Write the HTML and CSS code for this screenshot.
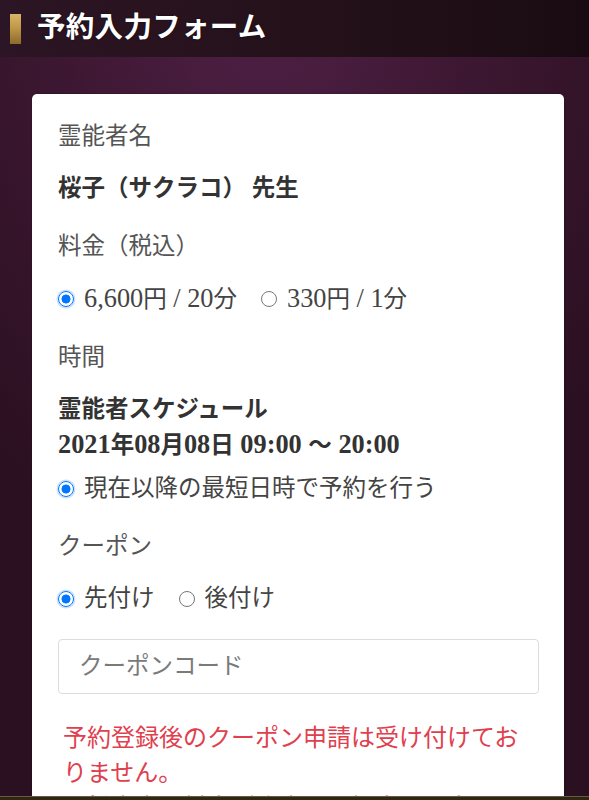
FILE: index.html
```html
<!DOCTYPE html>
<html lang="ja">
<head>
<meta charset="utf-8">
<title>予約入力フォーム</title>
<link rel="stylesheet" href="styles.css">
</head>
<body>
<header class="page-header">
  <span class="title-bar"></span>
  <h1 class="page-title">予約入力フォーム</h1>
</header>
<main class="page-main">
  <form class="card">
    <div class="group">
      <div class="label">霊能者名</div>
      <div class="value">桜子（サクラコ） 先生</div>
    </div>
    <div class="group">
      <div class="label">料金（税込）</div>
      <div class="radios">
        <label class="radio"><input type="radio" name="price" checked><span><span class="num">6,600</span>円<span class="num"> / 20</span>分</span></label>
        <label class="radio"><input type="radio" name="price"><span><span class="num">330</span>円<span class="num"> / 1</span>分</span></label>
      </div>
    </div>
    <div class="group">
      <div class="label">時間</div>
      <div class="value">霊能者スケジュール</div>
      <div class="value"><span class="num">2021</span>年<span class="num">08</span>月<span class="num">08</span>日<span class="num"> 09:00 </span>～<span class="num"> 20:00</span></div>
      <div class="radios radios-time">
        <label class="radio"><input type="radio" name="time" checked><span>現在以降の最短日時で予約を行う</span></label>
      </div>
    </div>
    <div class="group group-coupon">
      <div class="label">クーポン</div>
      <div class="radios">
        <label class="radio"><input type="radio" name="coupon" checked><span>先付け</span></label>
        <label class="radio"><input type="radio" name="coupon"><span>後付け</span></label>
      </div>
      <input class="text-input" type="text" placeholder="クーポンコード">
    </div>
    <div class="notice">
      <p>予約登録後のクーポン申請は受け付けておりません。</p>
      <p>※鑑定中に料金が発生した場合は返金できませんのでご了承ください。</p>
    </div>
  </form>
</main>
<div class="bottom-bar"></div>
</body>
</html>
```
FILE: styles.css
```css
html, body {
  margin: 0;
  padding: 0;
}
body {
  min-height: 100vh;
  font-family: "Liberation Serif", "Noto Sans CJK JP", serif;
  font-size: 23.5px;
  color: #555;
  background: radial-gradient(ellipse 75% 65% at 45% 0%, #4f2045 0%, #3a162f 55%, #2a1020 100%);
  background-color: #2a1020;
  overflow: hidden;
}
.page-header {
  height: 57px;
  display: flex;
  align-items: center;
  padding-left: 10px;
  background: linear-gradient(90deg, #2c1524 0%, #241119 55%, #1a0b12 100%);
}
.title-bar {
  width: 11px;
  height: 30px;
  background: linear-gradient(180deg, #d8b36a 0%, #c09848 45%, #8e6a2c 100%);
  margin-right: 16px;
}
.page-title {
  margin: 0;
  font-size: 28.5px;
  font-weight: bold;
  color: #fff;
  letter-spacing: 0.3px;
  text-shadow: 0 0 2px rgba(0, 0, 0, 0.6);
  line-height: 1;
}
.page-main {
  padding: 37px 25px 0 32px;
}
.card {
  background: #fff;
  border-radius: 5px;
  box-shadow: 0 0 2px rgba(0, 0, 0, 0.35);
  padding: 25px 25px 40px 26px;
}
.group {
  margin-bottom: 23px;
}
.label {
  line-height: 35px;
  margin-bottom: 17px;
  color: #555;
}
.value {
  line-height: 35px;
  font-weight: bold;
  color: #333;
}
.num {
  font-size: 1.12em;
}
.radios {
  display: flex;
  gap: 24px;
  line-height: 35px;
  color: #444;
}
.radios-time {
  margin-top: 8px;
}
.radio {
  display: flex;
  align-items: center;
  gap: 10px;
}
.radio input {
  appearance: none;
  -webkit-appearance: none;
  flex: 0 0 16px;
  box-sizing: border-box;
  margin: 0;
  width: 16px;
  height: 16px;
  border-radius: 50%;
  border: 1.5px solid #777;
  background: #fff;
}
.radio input:checked {
  border: 1.5px solid #0075ff;
  background: radial-gradient(circle, #0075ff 0 4.2px, #fff 4.8px);
  box-shadow: 0 0 0 1.5px rgba(0, 117, 255, 0.22);
}
.group-coupon {
  margin-bottom: 27px;
}
.text-input {
  display: block;
  box-sizing: border-box;
  width: 100%;
  height: 55px;
  margin-top: 23px;
  padding: 0 20px;
  border: 1px solid #dadce0;
  border-radius: 4px;
  font-family: inherit;
  font-size: 23.5px;
  color: #333;
}
.text-input::placeholder {
  color: #7a7a7a;
}
.notice {
  padding-left: 5px;
  color: #e0404e;
  font-size: 24px;
  line-height: 35px;
}
.notice p {
  margin: 0;
}
.bottom-bar {
  position: fixed;
  left: 0;
  right: 0;
  bottom: 0;
  height: 3px;
  background: #2e2716;
  border-top: 1px solid #6a5a38;
}
```
